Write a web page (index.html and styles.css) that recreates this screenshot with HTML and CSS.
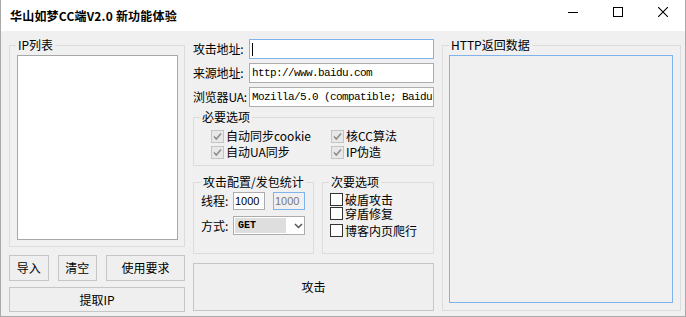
FILE: index.html
```html
<!DOCTYPE html>
<html lang="zh-CN">
<head>
<meta charset="utf-8">
<title>华山如梦CC端V2.0 新功能体验</title>
<link rel="stylesheet" href="styles.css">
</head>
<body>
<div class="window">
  <div class="titlebar">
    <div class="title">华山如梦CC端V2.0 新功能体验</div>
    <div class="controls">
      <span class="ctl"><svg width="10" height="10" viewBox="0 0 10 10"><path d="M0 5.5H10" stroke="#000" stroke-width="1"/></svg></span>
      <span class="ctl"><svg width="10" height="10" viewBox="0 0 10 10"><rect x="0.5" y="0.5" width="9" height="9" fill="none" stroke="#000" stroke-width="1"/></svg></span>
      <span class="ctl"><svg width="10" height="10" viewBox="0 0 10 10"><path d="M0 0L10 10M10 0L0 10" stroke="#000" stroke-width="1.1"/></svg></span>
    </div>
  </div>
  <div class="main">
    <div class="col col-left">
      <fieldset class="group group-ip">
        <legend>IP列表</legend>
        <div class="listbox"></div>
      </fieldset>
      <div class="btn-row">
        <button class="btn btn-s">导入</button>
        <button class="btn btn-s">清空</button>
        <button class="btn btn-w">使用要求</button>
      </div>
      <button class="btn btn-full">提取IP</button>
    </div>

    <div class="col col-mid">
      <div class="fields">
        <div class="field-row">
          <span class="field-label">攻击地址:</span>
          <div class="textbox focused"><span class="caret"></span></div>
        </div>
        <div class="field-row">
          <span class="field-label">来源地址:</span>
          <div class="textbox"><span class="mono">http://www.baidu.com</span></div>
        </div>
        <div class="field-row">
          <span class="field-label">浏览器UA:</span>
          <div class="textbox"><span class="mono">Mozilla/5.0 (compatible; Baidu</span></div>
        </div>
      </div>

      <fieldset class="group group-req">
        <legend>必要选项</legend>
        <div class="check-grid">
          <div class="check"><span class="box disabled"><svg width="11" height="11" viewBox="0 0 11 11"><path d="M2 5.5L4.3 8L9 2.5" fill="none" stroke="#8e8e8e" stroke-width="1.6"/></svg></span><span class="ctext">自动同步cookie</span></div>
          <div class="check"><span class="box disabled"><svg width="11" height="11" viewBox="0 0 11 11"><path d="M2 5.5L4.3 8L9 2.5" fill="none" stroke="#8e8e8e" stroke-width="1.6"/></svg></span><span class="ctext">核CC算法</span></div>
          <div class="check"><span class="box disabled"><svg width="11" height="11" viewBox="0 0 11 11"><path d="M2 5.5L4.3 8L9 2.5" fill="none" stroke="#8e8e8e" stroke-width="1.6"/></svg></span><span class="ctext">自动UA同步</span></div>
          <div class="check"><span class="box disabled"><svg width="11" height="11" viewBox="0 0 11 11"><path d="M2 5.5L4.3 8L9 2.5" fill="none" stroke="#8e8e8e" stroke-width="1.6"/></svg></span><span class="ctext">IP伪造</span></div>
        </div>
      </fieldset>

      <div class="group-pair">
        <fieldset class="group group-cfg">
          <legend>攻击配置/发包统计</legend>
          <div class="cfg-row">
            <span class="cfg-label">线程:</span>
            <div class="numbox">1000</div>
            <div class="numbox numbox-disabled">1000</div>
          </div>
          <div class="cfg-row cfg-row-2">
            <span class="cfg-label">方式:</span>
            <div class="select">
              <span class="select-value">GET</span>
              <svg class="chev" width="9" height="6" viewBox="0 0 9 6"><path d="M1 1L4.5 4.5L8 1" fill="none" stroke="#555" stroke-width="1.5"/></svg>
            </div>
          </div>
        </fieldset>
        <fieldset class="group group-opt">
          <legend>次要选项</legend>
          <div class="opt-list">
            <div class="check opt"><span class="box"></span><span class="ctext">破盾攻击</span></div>
            <div class="check opt"><span class="box"></span><span class="ctext">穿盾修复</span></div>
            <div class="check opt opt-last"><span class="box"></span><span class="ctext">博客内页爬行</span></div>
          </div>
        </fieldset>
      </div>

      <button class="btn btn-attack">攻击</button>
    </div>

    <div class="col col-right">
      <fieldset class="group group-http">
        <legend>HTTP返回数据</legend>
        <div class="resultbox"></div>
      </fieldset>
    </div>
  </div>
</div>
</body>
</html>
```

FILE: styles.css
```css
* { box-sizing: border-box; }
html, body { margin: 0; padding: 0; }
body {
  width: 686px;
  height: 317px;
  overflow: hidden;
  background: #fff;
  font-family: "Noto Sans CJK SC", "Liberation Sans", sans-serif;
  font-size: 12px;
  color: #000;
}
.window {
  width: 686px;
  height: 317px;
  border: 1px solid #a9a9a9;
  border-top: 0;
  display: flex;
  flex-direction: column;
  background: #f0f0f0;
}
.titlebar {
  height: 31px;
  flex: none;
  background: #fff;
  display: flex;
  align-items: center;
  padding-left: 9px;
}
.title {
  flex: 1;
  font-size: 12px;
  letter-spacing: 0.2px;
  font-weight: bold;
  line-height: 16px;
  padding-top: 1px;
}
.controls {
  align-self: flex-start;
  display: flex;
}
.ctl {
  width: 45px;
  height: 23px;
  display: flex;
  align-items: center;
  justify-content: center;
  padding-top: 1px;
}
.main {
  flex: 1;
  display: flex;
  padding: 7px 4px 0 8px;
}
.col { display: flex; flex-direction: column; }
.col-left { width: 176px; margin-right: 8px; }
.col-mid { width: 241px; margin-right: 8px; }
.col-right { width: 239px; }

.group {
  margin: 0;
  padding: 3px 6px 6px 6px;
  border: 1px solid #dcdcdc;
  min-width: 0;
}
.group legend {
  padding: 0 2px;
  margin: 0;
  line-height: 14px;
  font-size: 12px;
}
.group-ip { height: 209px; }
.listbox {
  margin-left: 1px;
  width: 161px;
  height: 185px;
  background: #fff;
  border: 1px solid #a7a7a7;
}
.btn {
  font-family: "Noto Sans CJK SC", "Liberation Sans", sans-serif;
  font-size: 12px;
  color: #000;
  background: #efefef;
  border: 1px solid #c6c6c6;
  padding: 0;
  margin: 0;
  line-height: 14px;
}
.btn-row {
  display: flex;
  gap: 9px;
  margin-top: 8px;
  height: 26px;
}
.btn-s { width: 40px; }
.btn-w { width: 80px; }
.btn-full { margin-top: 6px; height: 25px; width: 176px; }

.fields {
  display: flex;
  flex-direction: column;
  gap: 4px;
  margin-top: 1px;
}
.field-row {
  display: flex;
  align-items: center;
  height: 20px;
}
.field-label {
  width: 56px;
  flex: none;
  white-space: nowrap;
  line-height: 14px;
  letter-spacing: -0.2px;
}
.textbox {
  width: 185px;
  flex: none;
  height: 20px;
  background: #fff;
  border: 1px solid #adadad;
  display: flex;
  align-items: center;
  padding-left: 2px;
  overflow: hidden;
  white-space: nowrap;
}
.textbox.focused { border-color: #7eb4ea; }
.caret {
  width: 1px;
  height: 13px;
  background: #000;
}
.mono {
  font-family: "Liberation Mono", "DejaVu Sans Mono", monospace;
  font-size: 11px;
  letter-spacing: -0.6px;
}

.group-req {
  margin-top: 3px;
  height: 56px;
  padding-top: 4px;
}
.check-grid {
  display: grid;
  grid-template-columns: 120px auto;
  grid-auto-rows: 16px;
  margin-left: 11px;
}
.check {
  display: flex;
  align-items: center;
  white-space: nowrap;
}
.box {
  width: 13px;
  height: 13px;
  border: 1px solid #333;
  background: #fff;
  display: flex;
  align-items: center;
  justify-content: center;
  flex: none;
}
.box.disabled {
  border-color: #c4c4c4;
  background: #e8e8e8;
}
.ctext {
  margin-left: 2px;
  line-height: 14px;
}

.group-pair {
  display: flex;
  gap: 8px;
  margin-top: 9px;
}
.group-cfg { width: 121px; height: 79px; }
.group-cfg legend { margin-left: 1px; }
.group-opt { width: 112px; height: 79px; }
.cfg-row {
  display: flex;
  align-items: center;
  height: 18px;
  margin-left: 1px;
}
.cfg-row-2 { margin-top: 6px; height: 19px; }
.cfg-label { width: 32px; line-height: 14px; }
.numbox {
  width: 32px;
  height: 18px;
  background: #fff;
  border: 1px solid #adadad;
  font-family: "Liberation Sans", sans-serif;
  font-size: 11px;
  line-height: 16px;
  padding-left: 1px;
}
.numbox-disabled {
  margin-left: 8px;
  background: #f0f0f0;
  border-color: #7eb4ea;
  color: #777;
}
.select {
  width: 72px;
  height: 19px;
  background: #fff;
  border: 1px solid #adadad;
  display: flex;
  align-items: center;
  padding: 1px;
}
.select-value {
  width: 51px;
  height: 15px;
  background: #dedede;
  font-family: "Liberation Mono", "DejaVu Sans Mono", monospace;
  font-weight: bold;
  font-size: 10px;
  line-height: 15px;
  padding-left: 3px;
}
.chev { margin-left: 8px; }
.opt-list {
  display: flex;
  flex-direction: column;
  margin-left: 1px;
}
.opt { height: 14px; }
.opt .ctext { line-height: 13px; }
.opt-last { margin-top: 3px; }

.btn-attack {
  margin-top: 9px;
  height: 48px;
  width: 241px;
  background: #efefef;
}

.group-http {
  height: 273px;
  padding-bottom: 7px;
}
.resultbox {
  width: 224px;
  height: 248px;
  border: 1px solid #7eb4ea;
  background: #f0f0f0;
}
```
